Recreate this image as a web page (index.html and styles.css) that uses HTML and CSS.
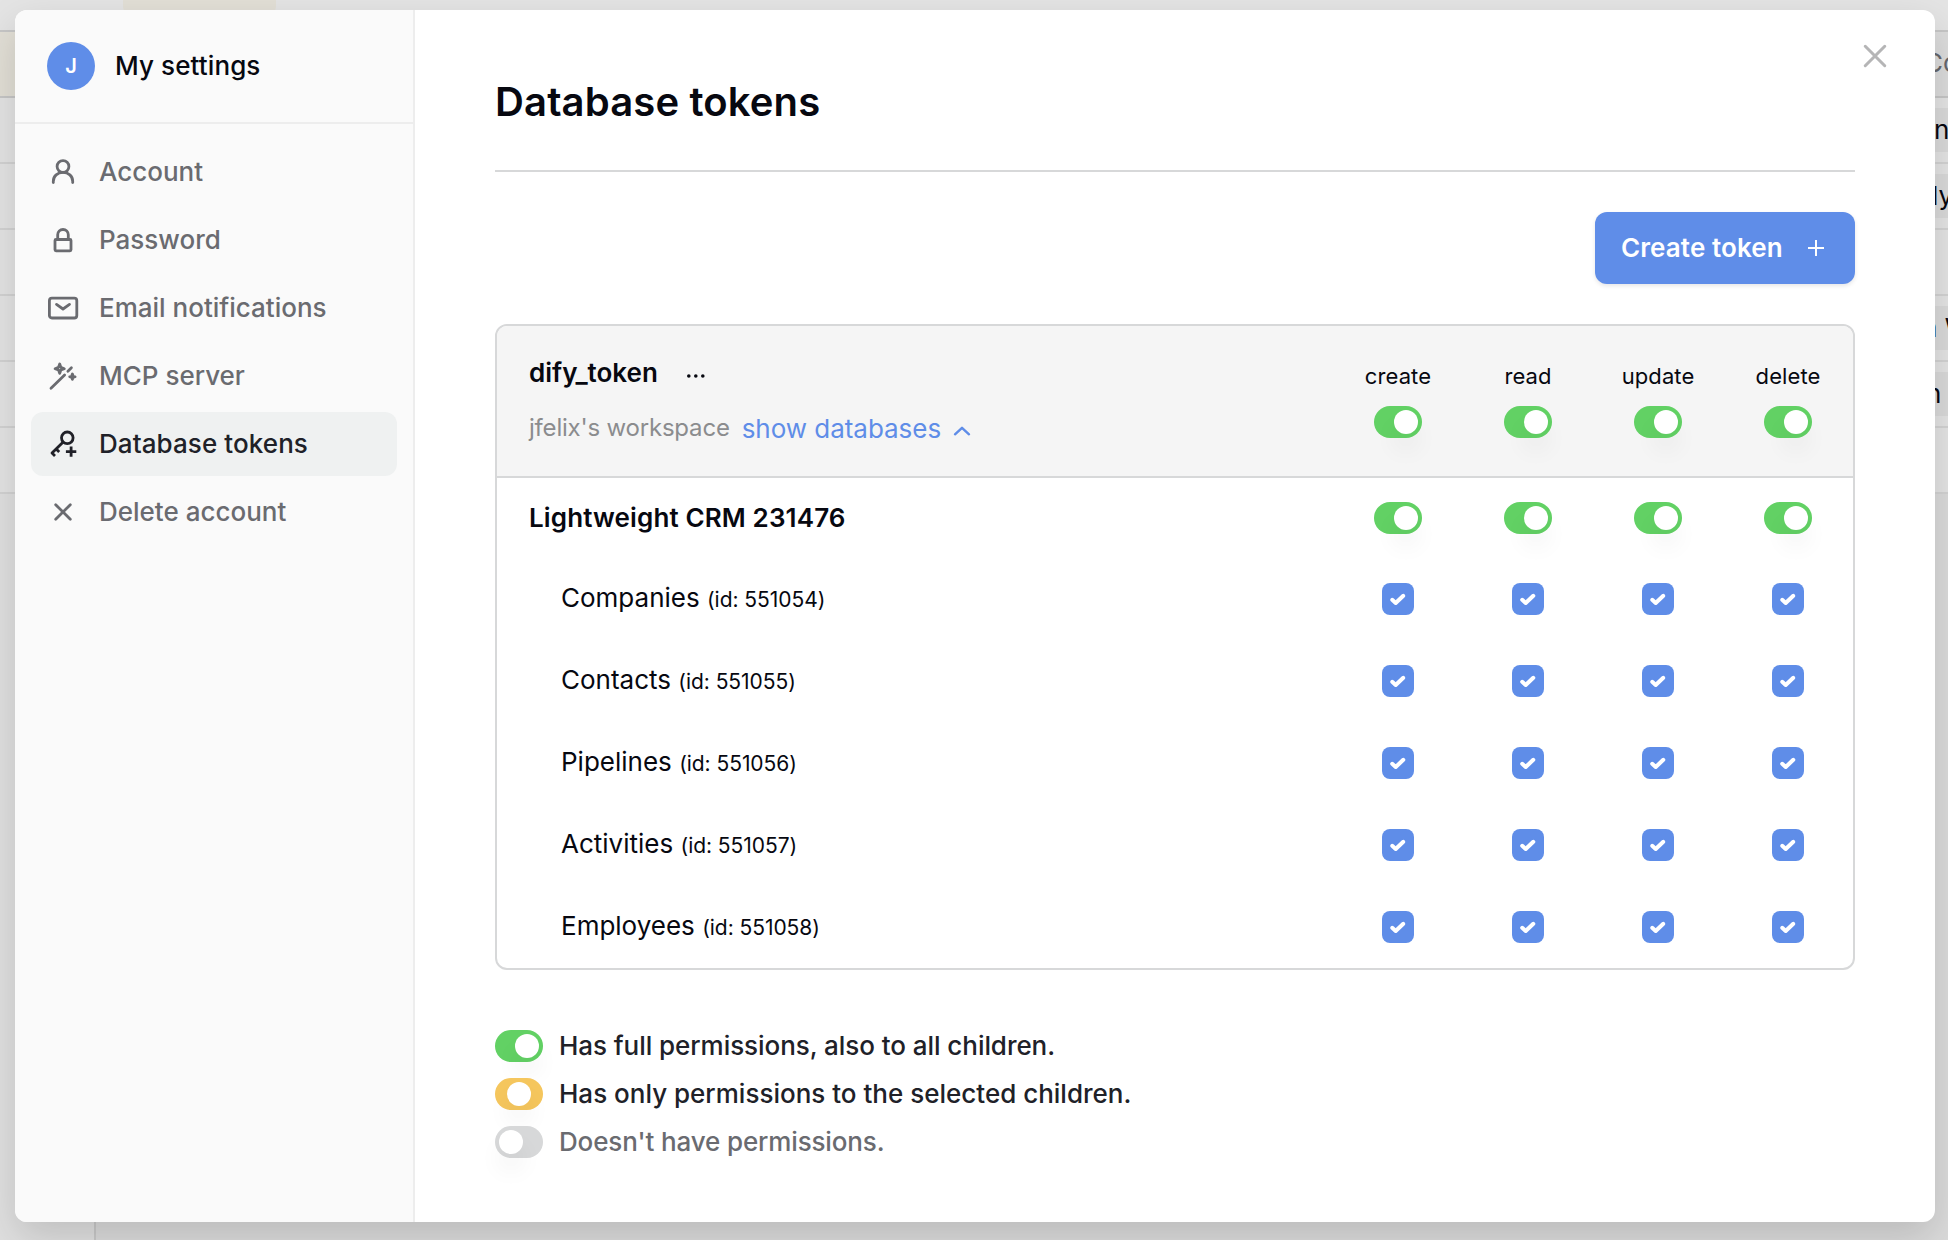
FILE: index.html
```html
<!DOCTYPE html>
<html lang="en">
<head>
<meta charset="utf-8">
<title>My settings</title>
<link rel="stylesheet" href="styles.css">
</head>
<body>
<svg class="defs" width="0" height="0">
  <symbol id="check" viewBox="0 0 32 32"><path d="M10.2 16.8l3.5 3.2 7.6-7.2" fill="none" stroke="#fff" stroke-width="4" stroke-linecap="round" stroke-linejoin="round"/></symbol>
</svg>

<div class="app" aria-hidden="true">
  <div class="app__bar"><span class="app__pill"></span></div>
  <div class="app__row app__row--head"><span class="app__cell app__cell--first"></span><span class="app__cell app__cell--c">Co</span></div>
  <div class="app__row"><span class="app__cell app__cell--chip app__cell--n">n</span></div>
  <div class="app__row"><span class="app__cell app__cell--chip app__cell--ly">ly</span></div>
  <div class="app__row"></div>
  <div class="app__row"><span class="app__cell app__cell--chip app__cell--w">n W</span></div>
  <div class="app__row"><span class="app__cell app__cell--chip app__cell--m">n</span></div>
  <div class="app__row"></div>
  <div class="app__rest"><div class="app__rest-left"></div></div>
</div>

<div class="modal">
  <aside class="sidebar">
    <header class="sidebar__head"><span class="avatar">J</span><span class="sidebar__title">My settings</span></header>
    <nav class="nav">
      <a class="nav__item"><svg class="nav__icon" viewBox="0 0 32 32"><circle cx="16" cy="10.5" r="5.9"/><path d="M6.3 26.5v-1.2C6.3 20 10.6 16.4 16 16.4s9.7 3.6 9.7 8.9v1.2"/></svg><span>Account</span></a>
      <a class="nav__item"><svg class="nav__icon" viewBox="0 0 32 32"><rect x="8" y="15.5" width="16" height="11.3" rx="1"/><path d="M10.7 15.5v-4.7a5.3 5.3 0 0 1 10.6 0v4.7"/></svg><span>Password</span></a>
      <a class="nav__item"><svg class="nav__icon" viewBox="0 0 32 32"><rect x="2.4" y="6.2" width="27.4" height="19.8" rx="2.5"/><path d="M9.5 12.4L16 17l6.5-4.6"/></svg><span>Email notifications</span></a>
      <a class="nav__item"><svg class="nav__icon" viewBox="0 0 32 32"><path d="M4 28.3L17.6 15M20.9 11.2l3.5-3.4"/><path d="M12.7 4l1.2 3.4 3.4 1.3-3.4 1.3-1.2 3.4-1.2-3.4-3.4-1.3 3.4-1.3zM25.4 14l.7 2 2 .7-2 .7-.7 2-.7-2-2-.7 2-.7z"/></svg><span>MCP server</span></a>
      <a class="nav__item nav__item--active"><svg class="nav__icon" viewBox="0 0 32 32"><circle cx="20.3" cy="9.8" r="5.8"/><path d="M16.2 14L5 25.1l3 3M9.2 21l3 3M24.1 18.4v10.4M18.9 23.6h10.4" stroke-linecap="butt"/></svg><span>Database tokens</span></a>
      <a class="nav__item"><svg class="nav__icon" viewBox="0 0 32 32"><path d="M8.7 8.7l14.6 14.6M23.3 8.7L8.7 23.3"/></svg><span>Delete account</span></a>
    </nav>
  </aside>

  <main class="content">
    <svg class="close" viewBox="0 0 24 24"><path d="M3 3l18 18M21 3L3 21"/></svg>
    <h1 class="title">Database tokens</h1>
    <div class="actions"><button class="button"><span>Create token</span><svg class="button__icon" viewBox="0 0 16 16"><path d="M8 0v16M0 8h16"/></svg></button></div>

    <section class="card">
      <header class="card__head">
        <div class="card__info">
          <div class="card__line"><span class="card__name">dify_token</span><svg class="dots" viewBox="0 0 20 6"><circle cx="2.8" cy="3" r="1.8"/><circle cx="9.8" cy="3" r="1.8"/><circle cx="16.8" cy="3" r="1.8"/></svg></div>
          <div class="card__line card__line--sub"><span class="workspace">jfelix's workspace</span><a class="show">show databases<svg class="show__icon" viewBox="0 0 18 10"><path d="M2 8.3l7-6.5 7 6.5"/></svg></a></div>
        </div>
        <div class="perm"><span>create</span><i class="toggle"></i></div>
        <div class="perm"><span>read</span><i class="toggle"></i></div>
        <div class="perm"><span>update</span><i class="toggle"></i></div>
        <div class="perm"><span>delete</span><i class="toggle"></i></div>
      </header>
      <div class="row row--database"><div class="row__name">Lightweight CRM 231476</div><i class="toggle"></i><i class="toggle"></i><i class="toggle"></i><i class="toggle"></i></div>
      <div class="row"><div class="row__name">Companies <small>(id: 551054)</small></div><svg class="box"><use href="#check"/></svg><svg class="box"><use href="#check"/></svg><svg class="box"><use href="#check"/></svg><svg class="box"><use href="#check"/></svg></div>
      <div class="row"><div class="row__name">Contacts <small>(id: 551055)</small></div><svg class="box"><use href="#check"/></svg><svg class="box"><use href="#check"/></svg><svg class="box"><use href="#check"/></svg><svg class="box"><use href="#check"/></svg></div>
      <div class="row"><div class="row__name">Pipelines <small>(id: 551056)</small></div><svg class="box"><use href="#check"/></svg><svg class="box"><use href="#check"/></svg><svg class="box"><use href="#check"/></svg><svg class="box"><use href="#check"/></svg></div>
      <div class="row"><div class="row__name">Activities <small>(id: 551057)</small></div><svg class="box"><use href="#check"/></svg><svg class="box"><use href="#check"/></svg><svg class="box"><use href="#check"/></svg><svg class="box"><use href="#check"/></svg></div>
      <div class="row"><div class="row__name">Employees <small>(id: 551058)</small></div><svg class="box"><use href="#check"/></svg><svg class="box"><use href="#check"/></svg><svg class="box"><use href="#check"/></svg><svg class="box"><use href="#check"/></svg></div>
    </section>

    <ul class="legend">
      <li class="legend__full"><i class="toggle"></i><span>Has full permissions, also to all children.</span></li>
      <li><i class="toggle toggle--some"></i><span>Has only permissions to the selected children.</span></li>
      <li class="legend__none"><i class="toggle toggle--off"></i><span>Doesn't have permissions.</span></li>
    </ul>
  </main>
</div>
</body>
</html>
```
FILE: styles.css
```css
* { box-sizing: border-box; }

body {
  margin: 0;
  width: 1948px;
  height: 1240px;
  overflow: hidden;
  position: relative;
  padding: 10px 13px 18px 15px;
  font-family: Inter, "Liberation Sans", sans-serif;
  font-size: 26px;
  color: #070810;
  background: #e4e4e4;
}

.defs { position: absolute; }

/* Table view that stays visible around the modal */
.app { position: absolute; inset: 0; display: flex; flex-direction: column; }
.app__bar { height: 32px; flex: none; border-bottom: 2px solid #c6c6c6; padding-left: 123px; }
.app__pill { display: block; width: 153px; height: 18px; border-radius: 0 0 12px 12px; background: #e2dfd6; }
.app__row { height: 66px; flex: none; border-bottom: 2px solid #d3d3d3; display: flex; justify-content: flex-end; align-items: center; }
.app__row--head { border-color: #c6c6c6; align-items: stretch; justify-content: space-between; }
.app__cell { width: 48px; overflow: hidden; white-space: nowrap; line-height: 44px; }
.app__cell--first { width: 96px; background: #e2dfd6; }
.app__cell--c { line-height: 62px; padding-left: 24px; background: #dcdcdc; color: #66676c; }
.app__cell--chip { height: 44px; background: #dadada; }
.app__cell--n { padding-left: 34px; }
.app__cell--ly { padding-left: 32px; }
.app__cell--w { padding-left: 22px; }
.app__cell--m { padding-left: 26px; }
.app__rest { flex: 1; background: #dbdbdb; }
.app__rest-left { width: 96px; height: 100%; background: #e0e0e0; border-right: 2px solid #c9c9c9; }

.modal {
  position: relative;
  display: flex;
  height: 1212px;
  border-radius: 12px;
  background: #fff;
  box-shadow: 0 16px 40px rgba(0, 0, 0, .15);
}

.sidebar { width: 400px; flex: none; background: #fafafa; border-right: 2px solid #ededed; border-radius: 12px 0 0 12px; }
.sidebar__head { height: 114px; border-bottom: 2px solid #ededed; padding: 0 32px; display: flex; align-items: center; gap: 20px; font-weight: 500; }
.sidebar__title { padding-bottom: 2px; letter-spacing: .1px; }
.avatar { width: 48px; height: 48px; border-radius: 50%; background: #5f8de8; color: #fff; font-size: 20px; font-weight: 600; display: flex; align-items: center; justify-content: center; }

.nav { padding: 16px; display: flex; flex-direction: column; gap: 4px; }
.nav__item { height: 64px; border-radius: 12px; padding: 0 16px; display: flex; align-items: center; gap: 20px; color: #6a6b70; font-weight: 500; }
.nav__item span { padding-bottom: 2px; }
.nav__item--active { background: #eff1f1; color: #202128; letter-spacing: .08px; }
.nav__icon { width: 32px; height: 32px; fill: none; stroke: currentColor; stroke-width: 2.8; stroke-linecap: round; stroke-linejoin: round; }

.content { position: relative; flex: 1; padding: 0 80px; }
.close { position: absolute; left: 1447px; top: 33px; width: 26px; height: 26px; fill: none; stroke: #b5b5b6; stroke-width: 2.8; stroke-linecap: round; }
.title { margin: 0; height: 162px; padding-top: 68px; border-bottom: 2px solid #d7d8d9; font-size: 40px; line-height: 48px; font-weight: 600; letter-spacing: .14px; }
.actions { display: flex; justify-content: flex-end; margin: 40px 0; }
.button { width: 260px; height: 72px; border: 0; border-radius: 12px; background: #5f8de8; color: #fff; font: 600 26px Inter, sans-serif; padding: 0 31px 0 26px; display: flex; align-items: center; justify-content: space-between; box-shadow: 0 2px 4px rgba(7, 8, 16, .1); }
.button span { padding-bottom: 2px; letter-spacing: .1px; }
.button__icon { width: 16px; height: 16px; fill: none; stroke: #fff; stroke-width: 2; }

.card { border: 2px solid #d7d8d9; border-radius: 12px; overflow: hidden; }
.card__head { height: 152px; background: #f5f5f5; border-bottom: 2px solid #d7d8d9; display: grid; grid-template-columns: 1fr repeat(4, 130px); }
.card__info { padding: 27px 0 0 32px; }
.card__line { display: flex; align-items: center; line-height: 40px; }
.card__line--sub { margin-top: 14px; }
.card__name { font-weight: 600; }
.dots { width: 20px; height: 6px; margin: 5px 0 0 28px; fill: #070810; }
.workspace { font-size: 24px; color: #8b8c8e; letter-spacing: -.2px; }
.show { margin-left: 12px; color: #5f8de8; letter-spacing: -.04px; display: flex; align-items: center; padding-top: 2px; }
.show__icon { width: 18px; height: 10px; margin: 3px 0 0 12px; fill: none; stroke: currentColor; stroke-width: 2.4; stroke-linecap: round; stroke-linejoin: round; }
.perm { display: flex; flex-direction: column; align-items: center; padding-top: 36px; font-size: 22px; line-height: 28px; gap: 16px; letter-spacing: .1px; }

.toggle { display: block; flex: none; width: 48px; height: 32px; padding: 4px; border-radius: 16px; background: #62d164; }
.toggle::before { content: ""; display: block; width: 24px; height: 24px; margin-left: 16px; border-radius: 50%; background: #fff; box-shadow: 0 16px 24px rgba(7, 8, 16, .06); }
.toggle--some { background: #f5c65d; }
.toggle--some::before { margin-left: 8px; }
.toggle--off { background: #d7d8d9; }
.toggle--off::before { margin-left: 0; }

.row { height: 82px; display: grid; grid-template-columns: 1fr repeat(4, 130px); align-items: center; justify-items: center; }
.row--database { height: 80px; font-weight: 600; letter-spacing: .13px; }
.row__name { justify-self: start; padding: 0 0 3px 64px; }
.row--database .row__name { padding: 0 0 2px 32px; }
.row small { font-size: 21px; letter-spacing: -.05px; }
.box { width: 32px; height: 32px; border-radius: 8px; background: #5f8de8; }

.legend { list-style: none; margin: 60px 0 0; padding: 0; display: flex; flex-direction: column; gap: 16px; font-weight: 500; color: #202128; }
.legend li { height: 32px; display: flex; align-items: center; gap: 16px; }
.legend span { padding-bottom: 1px; }
.legend__full { letter-spacing: -.06px; }
.legend .legend__none { color: #6a6b70; letter-spacing: -.14px; }
```
